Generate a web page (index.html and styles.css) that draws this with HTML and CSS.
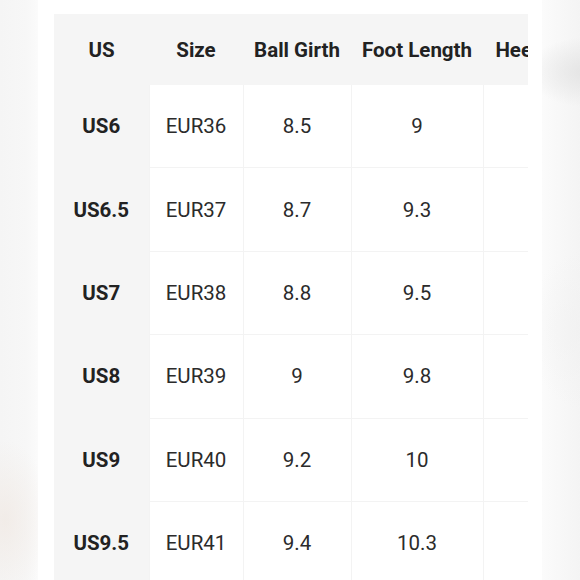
FILE: index.html
```html
<!DOCTYPE html>
<html>
<head>
<meta charset="utf-8">
<link rel="stylesheet" href="styles.css">
</head>
<body>
<div class="page">
  <div class="side side-left"></div>
  <main class="panel">
    <div class="table-wrap">
      <table class="chart">
        <colgroup>
          <col class="c-us">
          <col class="c-size">
          <col class="c-ball">
          <col class="c-foot">
          <col class="c-heel">
        </colgroup>
        <thead>
          <tr>
            <th>US</th>
            <th>Size</th>
            <th>Ball Girth</th>
            <th>Foot Length</th>
            <th>Heel Height</th>
          </tr>
        </thead>
        <tbody>
          <tr><th>US6</th><td>EUR36</td><td>8.5</td><td>9</td><td></td></tr>
          <tr><th>US6.5</th><td>EUR37</td><td>8.7</td><td>9.3</td><td></td></tr>
          <tr><th>US7</th><td>EUR38</td><td>8.8</td><td>9.5</td><td></td></tr>
          <tr><th>US8</th><td>EUR39</td><td>9</td><td>9.8</td><td></td></tr>
          <tr><th>US9</th><td>EUR40</td><td>9.2</td><td>10</td><td></td></tr>
          <tr><th>US9.5</th><td>EUR41</td><td>9.4</td><td>10.3</td><td></td></tr>
        </tbody>
      </table>
    </div>
  </main>
  <div class="side side-right"></div>
</div>
</body>
</html>
```

FILE: styles.css
```css
html, body {
  margin: 0;
  padding: 0;
  background: #ffffff;
}

.page {
  width: 580px;
  height: 580px;
  display: flex;
  overflow: hidden;
  font-family: Roboto, "Liberation Sans", sans-serif;
}

.side {
  width: 38px;
  flex: none;
}

.side-left {
  background:
    radial-gradient(ellipse 45px 80px at 5px 520px, rgba(240, 232, 226, 0.7), rgba(240, 232, 226, 0) 100%),
    linear-gradient(to right, #f5f5f5 0%, #f7f7f7 70%, #fbfbfb 100%);
}

.side-right {
  background:
    radial-gradient(ellipse 60px 35px at 45px 72px, rgba(226, 226, 226, 0.9), rgba(226, 226, 226, 0) 100%),
    radial-gradient(ellipse 60px 80px at 45px 330px, rgba(240, 240, 240, 0.7), rgba(240, 240, 240, 0) 100%),
    linear-gradient(to right, #fbfbfb 0%, #f4f4f4 100%);
}

.panel {
  width: 504px;
  flex: none;
  background: #ffffff;
  padding: 14px 0 0 16px;
  box-sizing: border-box;
}

.table-wrap {
  width: 474px;
  overflow: hidden;
}

.chart {
  border-collapse: collapse;
  table-layout: fixed;
  width: 562px;
  font-size: 20.5px;
  color: #2a2a2a;
}

.c-us { width: 95px; }
.c-size { width: 94px; }
.c-ball { width: 108px; }
.c-foot { width: 132px; }
.c-heel { width: 133px; }

.chart th,
.chart td {
  padding: 0;
  text-align: center;
  vertical-align: middle;
  white-space: nowrap;
}

.chart thead th {
  height: 71px;
  background: #f5f5f5;
  font-weight: 700;
  color: #222222;
}

.chart tbody th,
.chart tbody td {
  height: 82.4px;
}

.chart tbody th {
  background: #f5f5f5;
  font-weight: 700;
  color: #222222;
}

.chart tbody td {
  background: #ffffff;
  font-weight: 400;
  color: #2b2b2b;
  border-left: 1px solid #f3f3f3;
  border-top: 1px solid #f3f3f3;
}

.chart tbody tr:first-child td {
  border-top: none;
}
```
